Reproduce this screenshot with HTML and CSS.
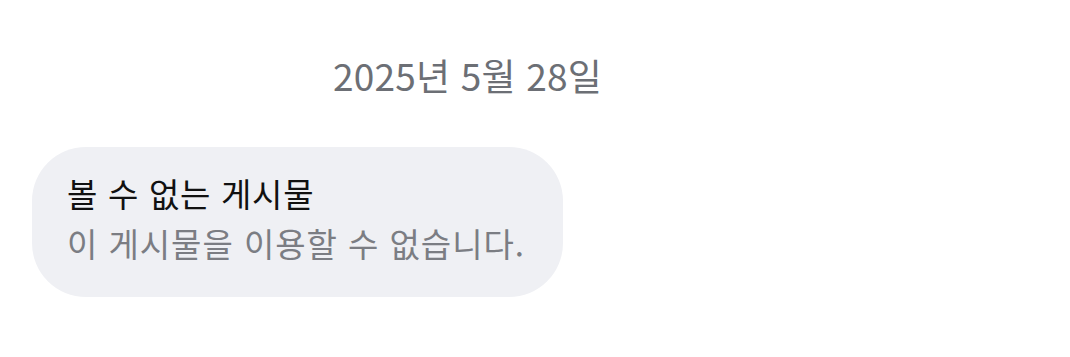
FILE: index.html
```html
<!DOCTYPE html>
<html lang="ko">
  <head>
    <meta charset="UTF-8" />
    <meta name="viewport" content="width=device-width, initial-scale=1.0" />
    <title>Message</title>
    <link rel="stylesheet" href="styles.css">
  </head>
  <body>
    <div class="date">2025년 5월 28일</div>
    <div class="thread">
      <div class="bubble">
        <div class="title">볼 수 없는 게시물</div>
        <div class="sub">이 게시물을 이용할 수 없습니다.</div>
      </div>
    </div>
  </body>
</html>
```

FILE: styles.css
```css
body {
  margin: 0;
  background: #fff;
  font-family: "Noto Sans CJK KR", "Noto Sans", sans-serif;
}
.date {
  padding: 49px 0 0 333px;
  font-size: 37px;
  line-height: 52px;
  letter-spacing: 0.2px;
  color: #6c6f75;
}
.thread {
  display: flex;
  padding: 46px 0 0 32px;
}
.bubble {
  background: #eff0f4;
  border-radius: 54px;
  padding: 22px 38px 29px 35px;
}
.title,
.sub {
  font-size: 33px;
  line-height: 49px;
  letter-spacing: 0.7px;
}
.title {
  color: #111;
}
.sub {
  color: #7b7d83;
  letter-spacing: 0.95px;
  margin-top: 1px;
}
```
